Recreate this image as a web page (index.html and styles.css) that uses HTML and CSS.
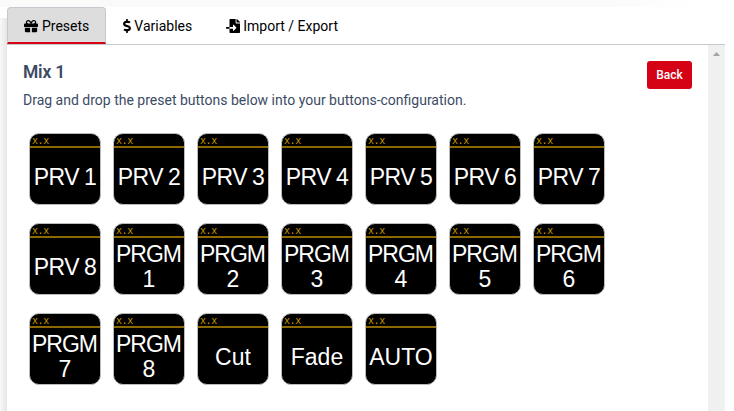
FILE: index.html
```html
<!DOCTYPE html>
<html lang="en">
<head>
<meta charset="utf-8">
<title>Presets</title>
<link rel="stylesheet" href="styles.css">
</head>
<body>
<main class="panel">
  <nav class="tabs">
    <a class="tab active"><svg class="icon" viewBox="0 0 512 512"><path d="M32 448c0 17.7 14.3 32 32 32h160V320H32v128zm256 32h160c17.7 0 32-14.3 32-32V320H288v160zm192-320h-42.1c6.2-12.1 10.1-25.5 10.1-40 0-48.5-39.5-88-88-88-41.6 0-68.5 21.3-103 68.3-34.5-47-61.4-68.3-103-68.3-48.5 0-88 39.5-88 88 0 14.5 3.8 27.9 10.1 40H32c-17.7 0-32 14.3-32 32v80c0 8.8 7.2 16 16 16h480c8.8 0 16-7.2 16-16v-80c0-17.7-14.3-32-32-32zm-326.1 0c-22.1 0-40-17.9-40-40s17.9-40 40-40c19.9 0 34.6 3.3 86.1 80h-86.1zm206.1 0h-86.1c51.4-76.5 65.7-80 86.1-80 22.1 0 40 17.9 40 40s-17.9 40-40 40z"/></svg>Presets</a>
    <a class="tab"><svg class="icon narrow" viewBox="0 0 288 512"><path d="M209.2 233.4l-108-31.6C88.7 198.2 80 186.5 80 173.5c0-16.3 13.2-29.5 29.5-29.5h66.3c12.2 0 24.2 3.7 34.2 10.5 6.1 4.1 14.3 3.1 19.5-2l34.8-34c7.1-6.9 6.1-18.4-1.8-24.5C238 74.8 207.4 64.1 176 64V16c0-8.8-7.2-16-16-16h-32c-8.8 0-16 7.2-16 16v48h-2.5C45.8 64-5.4 118.7.5 183.6c4.2 46.1 39.4 83.6 83.8 96.6l102.5 30c12.5 3.7 21.2 15.3 21.2 28.3 0 16.3-13.2 29.5-29.5 29.5h-66.3C100 368 88 364.3 78 357.5c-6.1-4.1-14.3-3.1-19.5 2l-34.8 34c-7.1 6.9-6.1 18.4 1.8 24.5 24.5 19.2 55.1 29.9 86.5 30v48c0 8.8 7.2 16 16 16h32c8.8 0 16-7.2 16-16v-48.2c46.6-.9 90.3-28.6 105.7-72.7 21.5-61.6-14.6-124.8-72.5-141.7z"/></svg>Variables</a>
    <a class="tab"><svg class="icon" viewBox="0 0 512 512"><path d="M16 288c-8.8 0-16 7.2-16 16v32c0 8.8 7.2 16 16 16h112v-64zm489-183L407.1 7c-4.5-4.5-10.6-7-17-7H384v128h128v-6.1c0-6.3-2.5-12.4-7-16.9zm-153 31V0H152c-13.3 0-24 10.7-24 24v264h128v-65.2c0-14.3 17.3-21.4 27.4-11.3L379 308c6.6 6.7 6.6 17.4 0 24l-95.7 96.4c-10.1 10.1-27.4 3-27.4-11.3V352H128v136c0 13.3 10.7 24 24 24h336c13.3 0 24-10.7 24-24V160H376c-13.2 0-24-10.8-24-24z"/></svg>Import / Export</a>
  </nav>
  <div class="body">
    <section class="content">
      <header class="heading">
        <div>
          <h1>Mix 1</h1>
          <p>Drag and drop the preset buttons below into your buttons-configuration.</p>
        </div>
        <button class="back">Back</button>
      </header>
      <div class="grid">
        <div class="key"><span class="bar">x.x</span><span class="label preview">PRV 1</span></div>
        <div class="key"><span class="bar">x.x</span><span class="label preview">PRV 2</span></div>
        <div class="key"><span class="bar">x.x</span><span class="label preview">PRV 3</span></div>
        <div class="key"><span class="bar">x.x</span><span class="label preview">PRV 4</span></div>
        <div class="key"><span class="bar">x.x</span><span class="label preview">PRV 5</span></div>
        <div class="key"><span class="bar">x.x</span><span class="label preview">PRV 6</span></div>
        <div class="key"><span class="bar">x.x</span><span class="label preview">PRV 7</span></div>
        <div class="key"><span class="bar">x.x</span><span class="label preview">PRV 8</span></div>
        <div class="key"><span class="bar">x.x</span><span class="label program">PRGM<br>1</span></div>
        <div class="key"><span class="bar">x.x</span><span class="label program">PRGM<br>2</span></div>
        <div class="key"><span class="bar">x.x</span><span class="label program">PRGM<br>3</span></div>
        <div class="key"><span class="bar">x.x</span><span class="label program">PRGM<br>4</span></div>
        <div class="key"><span class="bar">x.x</span><span class="label program">PRGM<br>5</span></div>
        <div class="key"><span class="bar">x.x</span><span class="label program">PRGM<br>6</span></div>
        <div class="key"><span class="bar">x.x</span><span class="label program">PRGM<br>7</span></div>
        <div class="key"><span class="bar">x.x</span><span class="label program">PRGM<br>8</span></div>
        <div class="key"><span class="bar">x.x</span><span class="label">Cut</span></div>
        <div class="key"><span class="bar">x.x</span><span class="label">Fade</span></div>
        <div class="key"><span class="bar">x.x</span><span class="label">AUTO</span></div>
      </div>
    </section>
    <div class="scrollbar"><svg viewBox="0 0 7 4"><path d="M0 4h7L3.5 0z"/></svg></div>
  </div>
</main>
</body>
</html>
```
FILE: styles.css
```css
* { box-sizing: border-box; }
body {
  margin: 0;
  height: 411px;
  padding: 7px 9px 0 7px;
  overflow: hidden;
  background:
    linear-gradient(to right, #f8f8f8, #e6e6e6) 0 18px / 7px 393px no-repeat,
    linear-gradient(to right, #fafafa, #fafafa 600px, #fff 700px) 0 0 / 734px 7px no-repeat,
    #fff;
  font: 14px/21px Roboto, sans-serif;
  color: #3c4b64;
}
.panel { height: 404px; display: flex; flex-direction: column; background: #fff; }
.tabs { display: flex; height: 38px; border-bottom: 1px solid #c4c9d0; flex: none; }
.tab {
  display: flex;
  align-items: center;
  gap: 3px;
  height: 38px;
  padding: 0 16px;
  border: 1px solid transparent;
  color: #000;
  white-space: nowrap;
}
.tab.active {
  background: #ddd;
  border-color: #c4c9d0;
  border-bottom: 2px solid #d50215;
  border-radius: 4px 4px 0 0;
  height: 37px;
  padding: 2px 16px 0 16px;
  gap: 4px;
}
.icon { width: 14px; height: 14px; fill: #000; flex: none; }
.icon.narrow { width: 8px; }
.body { display: flex; flex: 1; }
.content { flex: 1; padding: 16px; }
.heading { display: flex; justify-content: space-between; align-items: flex-start; height: 72px; }
h1 { margin: 1px 0 7px; font-size: 17.5px; line-height: 21px; font-weight: 600; letter-spacing: -.2px; }
p { margin: 0; white-space: nowrap; }
.back {
  width: 45px;
  height: 28px;
  padding: 0;
  border: 0;
  border-radius: 3px;
  background: #d50215;
  color: #fff;
  font: 500 12px/28px Roboto, sans-serif;
}
.grid { display: grid; grid-template-columns: repeat(7, 72px); gap: 18px 12px; padding-left: 6px; }
.key {
  display: flex;
  flex-direction: column;
  height: 72px;
  overflow: hidden;
  border: 1px solid #bbb;
  border-radius: 10px;
  background: #000;
  color: #fff;
}
.bar {
  height: 14px;
  flex: none;
  padding-left: 2px;
  border-bottom: 2px solid #8c6900;
  color: #c89600;
  font: 10px/13px "DejaVu Sans Mono", monospace;
  letter-spacing: -.4px;
}
.label {
  flex: 1;
  padding-top: 1px;
  display: flex;
  align-items: center;
  justify-content: center;
  text-align: center;
  white-space: nowrap;
  font: 23px/26px "Liberation Sans", Arial, sans-serif;
}
.label.preview { letter-spacing: -.5px; word-spacing: -1px; }
.label.program { letter-spacing: -1px; padding: 2px 1px 0 0; line-height: 25px; }
.scrollbar { width: 17px; background: #f0f0f0; padding: 7px 5px; }
.scrollbar svg { display: block; width: 7px; height: 4px; fill: #a3a3a3; }
```
